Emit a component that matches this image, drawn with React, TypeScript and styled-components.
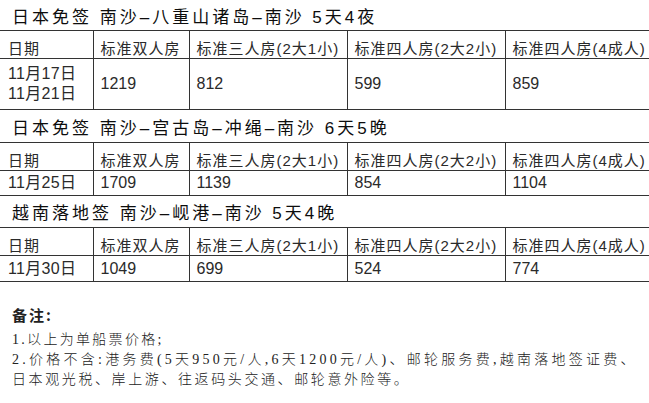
import React from "react";
import styled, { createGlobalStyle } from "styled-components";

const Global = createGlobalStyle`
  html, body { margin: 0; padding: 0; background: #fff; }
  body { font-family: "Liberation Sans", "Noto Sans CJK SC", sans-serif; color: #2a2a2a; }
`;

const Page = styled.div`
  width: 649px;
  height: 403px;
  overflow: hidden;
  background: #fff;
`;

const Title = styled.div<{ $h: number }>`
  height: ${(p) => p.$h}px;
  display: flex;
  align-items: center;
  padding-left: 12px;
  font-size: 17px;
  font-weight: 400;
  letter-spacing: 3px;
  color: #0d0d0d;
  white-space: nowrap;
`;

const Table = styled.table`
  width: 649px;
  border-collapse: collapse;
  table-layout: fixed;
  border-top: 1px solid #333;
`;

const HeadCell = styled.td`
  border-bottom: 1px solid #333;
  border-left: 1px solid #333;
  &:first-child { border-left: none; padding-left: 8px; }
  height: 28px;
  padding: 6px 0 0 7px;
  font-size: 15px;
  letter-spacing: 1px;
  color: #2a2a2a;
  white-space: nowrap;
  vertical-align: middle;
  box-sizing: border-box;
`;

const Cell = styled.td<{ $h: number }>`
  border-bottom: 1px solid #333;
  border-left: 1px solid #333;
  &:first-child { border-left: none; padding-left: 8px; letter-spacing: 0.3px; }
  height: ${(p) => p.$h}px;
  padding: 0 0 0 7px;
  font-size: 16px;
  line-height: 20px;
  color: #2a2a2a;
  white-space: nowrap;
  vertical-align: middle;
`;

const Notes = styled.div`
  padding: 23px 0 0 12px;
  font-family: "Liberation Serif", "Noto Sans CJK SC", serif;
  font-size: 14px;
  line-height: 20px;
  color: #222;
  white-space: nowrap;
`;

const NoteHead = styled.div`
  font-family: "Noto Sans CJK SC", sans-serif;
  font-weight: 700;
  font-size: 15px;
  letter-spacing: 2px;
  margin-bottom: 5px;
`;

const NoteLine = styled.div<{ $ls: number }>`
  letter-spacing: ${(p) => p.$ls}px;
  font-weight: 300;
`;

const headers = ["日期", "标准双人房", "标准三人房(2大1小)", "标准四人房(2大2小)", "标准四人房(4成人)"];

type Sec = {
  title: string;
  titleH: number;
  date: React.ReactNode;
  rowH: number;
  prices: string[];
};

const sections: Sec[] = [
  {
    title: "日本免签 南沙–八重山诸岛–南沙 5天4夜",
    titleH: 30,
    date: (
      <>
        11月17日
        <br />
        11月21日
      </>
    ),
    rowH: 50,
    prices: ["1219", "812", "599", "859"],
  },
  {
    title: "日本免签 南沙–宫古岛–冲绳–南沙 6天5晚",
    titleH: 32,
    date: "11月25日",
    rowH: 24,
    prices: ["1709", "1139", "854", "1104"],
  },
  {
    title: "越南落地签 南沙–岘港–南沙 5天4晚",
    titleH: 31,
    date: "11月30日",
    rowH: 25,
    prices: ["1049", "699", "524", "774"],
  },
];

export default function App() {
  return (
    <Page>
      <Global />
      {sections.map((s, i) => (
        <div key={i}>
          <Title $h={s.titleH}>{s.title}</Title>
          <Table>
            <colgroup>
              <col style={{ width: 93 }} />
              <col style={{ width: 96 }} />
              <col style={{ width: 158 }} />
              <col style={{ width: 158 }} />
              <col />
            </colgroup>
            <tbody>
              <tr>
                {headers.map((h) => (
                  <HeadCell key={h}>{h}</HeadCell>
                ))}
              </tr>
              <tr>
                <Cell $h={s.rowH}>{s.date}</Cell>
                {s.prices.map((p, j) => (
                  <Cell key={j} $h={s.rowH}>
                    {p}
                  </Cell>
                ))}
              </tr>
            </tbody>
          </Table>
        </div>
      ))}
      <Notes>
        <NoteHead>备注:</NoteHead>
        <NoteLine $ls={2.3}>1.以上为单船票价格;</NoteLine>
        <NoteLine $ls={3.25}>2.价格不含:港务费(5天950元/人,6天1200元/人)、邮轮服务费,越南落地签证费、</NoteLine>
        <NoteLine $ls={2.6}>日本观光税、岸上游、往返码头交通、邮轮意外险等。</NoteLine>
      </Notes>
    </Page>
  );
}
